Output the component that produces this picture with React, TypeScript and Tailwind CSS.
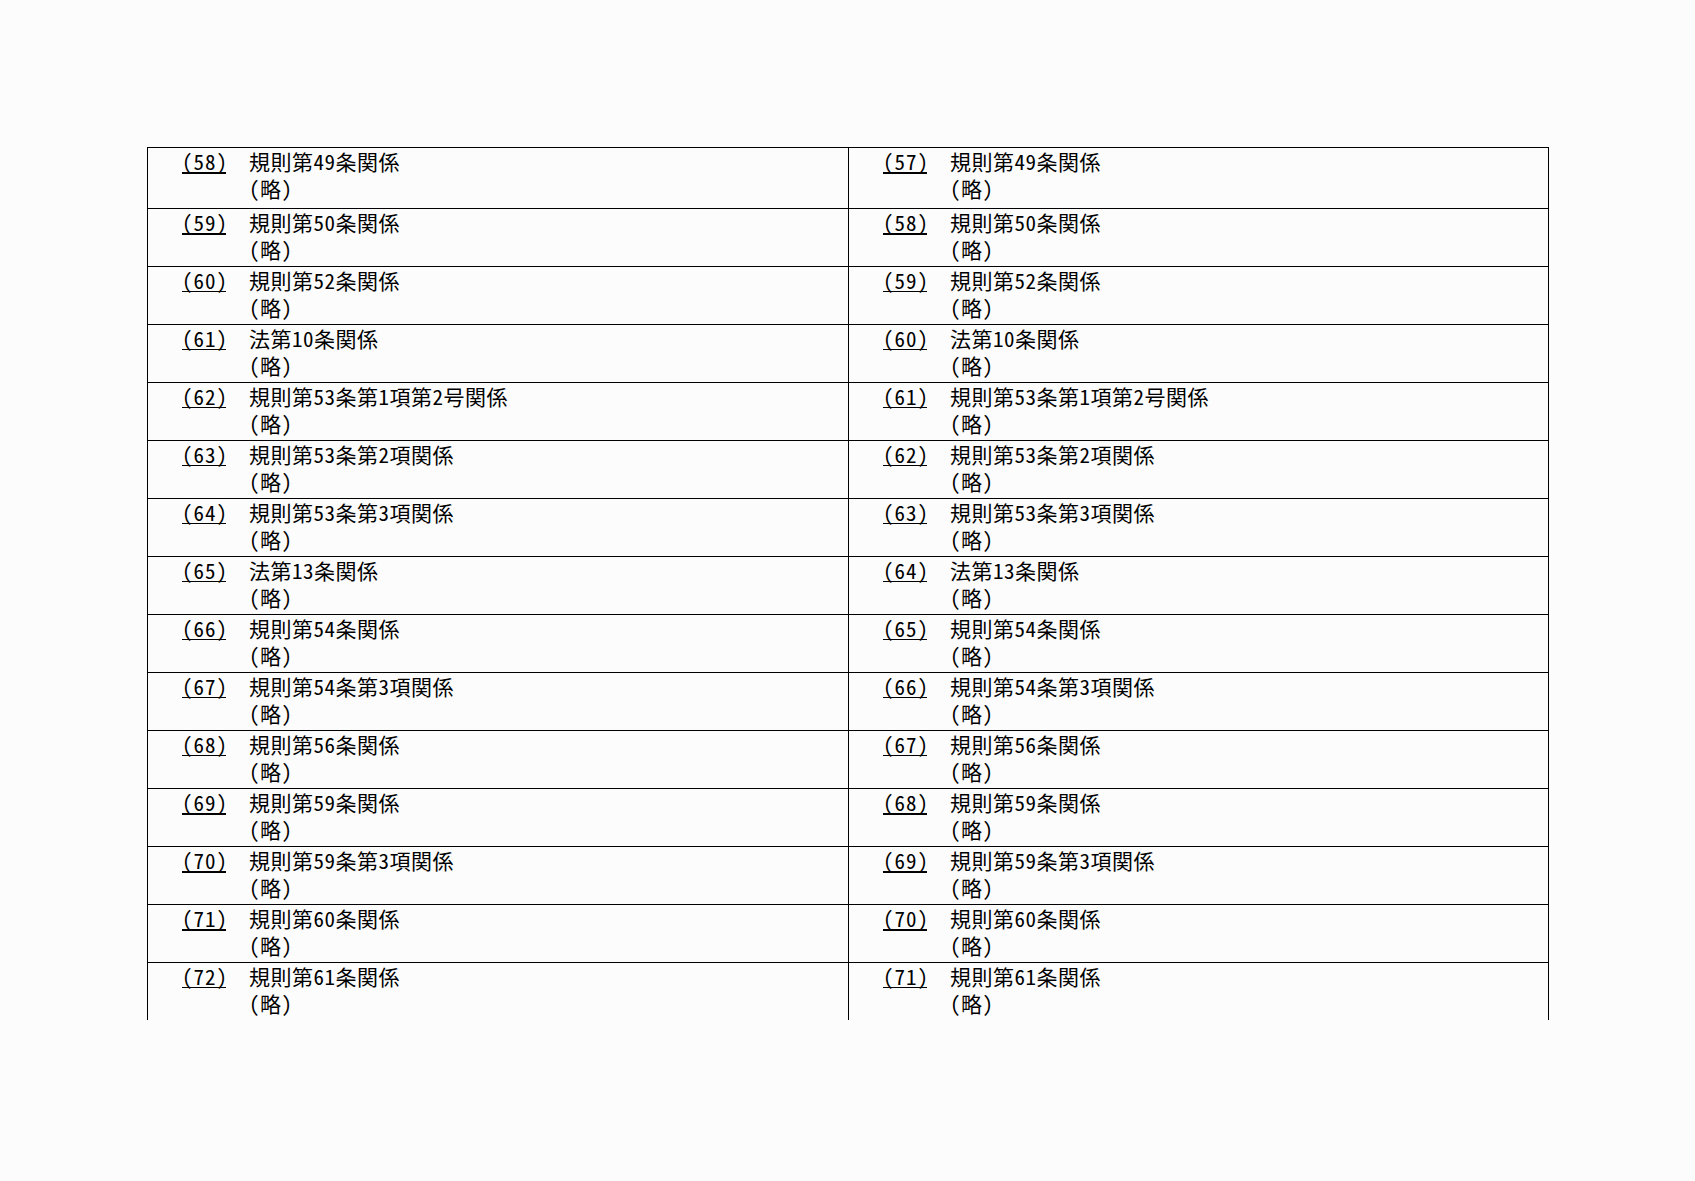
const rows = [
  { left: '58', right: '57', title: '規則第49条関係' },
  { left: '59', right: '58', title: '規則第50条関係' },
  { left: '60', right: '59', title: '規則第52条関係' },
  { left: '61', right: '60', title: '法第10条関係' },
  { left: '62', right: '61', title: '規則第53条第1項第2号関係' },
  { left: '63', right: '62', title: '規則第53条第2項関係' },
  { left: '64', right: '63', title: '規則第53条第3項関係' },
  { left: '65', right: '64', title: '法第13条関係' },
  { left: '66', right: '65', title: '規則第54条関係' },
  { left: '67', right: '66', title: '規則第54条第3項関係' },
  { left: '68', right: '67', title: '規則第56条関係' },
  { left: '69', right: '68', title: '規則第59条関係' },
  { left: '70', right: '69', title: '規則第59条第3項関係' },
  { left: '71', right: '70', title: '規則第60条関係' },
  { left: '72', right: '71', title: '規則第61条関係' },
]

// underline drawn heavier on these rows in the source scan
const heavy = [0, 1, 11, 12, 13]

function Cell({ num, title, thick }: { num: string; title: string; thick: boolean }) {
  return (
    <div className="flex pl-[34px]">
      <div className="w-[67px] shrink-0">
        <span
          className={`inline-block w-[44px] leading-[22px] text-center tracking-[1px] ${thick ? 'border-b-2' : 'border-b'} border-black`}
        >
          ({num})
        </span>
      </div>
      <div className="tracking-[0.5px]">
        <div>{title}</div>
        <div>(略)</div>
      </div>
    </div>
  )
}

export default function App() {
  return (
    <div
      className="min-h-[1181px] w-[1695px] bg-[#fcfcfc] pt-[147px] pl-[147px] text-[21px] leading-[27px] font-light text-black"
      style={{ fontFamily: '"Noto Sans Mono CJK JP", "Noto Sans CJK JP", monospace' }}
    >
      <div className="w-[1402px] border-l border-r border-black">
        {rows.map((r, i) => (
          <div
            key={r.left}
            className={`grid grid-cols-[701px_700px] border-t border-black ${i === 0 ? 'h-[61px]' : 'h-[58px]'}`}
          >
            <div className="border-r border-black">
              <Cell num={r.left} title={r.title} thick={heavy.includes(i)} />
            </div>
            <div>
              <Cell num={r.right} title={r.title} thick={heavy.includes(i)} />
            </div>
          </div>
        ))}
      </div>
    </div>
  )
}
